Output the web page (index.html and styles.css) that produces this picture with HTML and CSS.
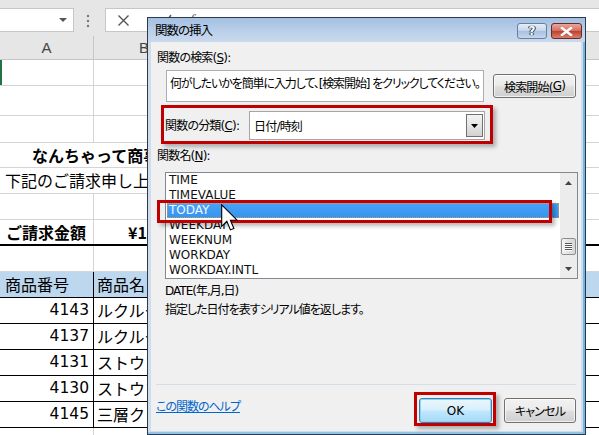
FILE: index.html
```html
<!DOCTYPE html>
<html lang="ja">
<head>
<meta charset="utf-8">
<title>関数の挿入</title>
<link rel="stylesheet" href="styles.css">
</head>
<body>
<div class="excel">
  <div class="fbar">
    <div class="namebox"><span class="nb-arrow"></span></div>
    <svg class="dots" width="6" height="14" viewBox="0 0 6 14"><circle cx="3" cy="2" r="1.2" fill="#777"/><circle cx="3" cy="7" r="1.2" fill="#777"/><circle cx="3" cy="12" r="1.2" fill="#777"/></svg>
    <div class="fbox">
      <svg class="fx-x" width="13" height="13" viewBox="0 0 13 13"><path d="M1.5 1.5 L11.5 11.5 M11.5 1.5 L1.5 11.5" stroke="#555" stroke-width="1.4" fill="none"/></svg>
      <svg class="fx-ok" width="14" height="14" viewBox="0 0 14 14"><path d="M1 8 L5 12 L13 1" stroke="#555" stroke-width="1.4" fill="none"/></svg>
      <span class="fx-f">fx</span>
    </div>
  </div>
  <div class="colhdr">
    <div class="ch ch-a">A</div>
    <div class="ch ch-b">B</div>
  </div>
  <div class="grid">
    <div class="row r26"><div class="ca active"></div><div class="cb"></div></div>
    <div class="row r30"><div class="ca"></div><div class="cb"></div></div>
    <div class="row r27"><div class="ca"></div><div class="cb"></div></div>
    <div class="row r25"><div class="span title">なんちゃって商事株式会社</div></div>
    <div class="row r26"><div class="span lead">下記のご請求申し上げます。</div></div>
    <div class="row r26"><div class="ca"></div><div class="cb"></div></div>
    <div class="row r26 total"><div class="ca bold">ご請求金額</div><div class="cb bold amt">¥12,960</div></div>
    <div class="row r26"><div class="ca"></div><div class="cb"></div></div>
    <div class="row r26 tbl thead"><div class="ca">商品番号</div><div class="cb">商品名</div></div>
    <div class="row r26 tbl"><div class="ca num">4143</div><div class="cb">ルクルーゼ</div></div>
    <div class="row r26 tbl"><div class="ca num">4137</div><div class="cb">ルクルーゼ</div></div>
    <div class="row r26 tbl"><div class="ca num">4131</div><div class="cb">ストウブ</div></div>
    <div class="row r26 tbl"><div class="ca num">4130</div><div class="cb">ストウブ</div></div>
    <div class="row r26 tbl"><div class="ca num">4145</div><div class="cb">三層クラッド</div></div>
    <div class="row r26"><div class="ca"></div><div class="cb"></div></div>
  </div>
</div>

<div class="dlg">
  <div class="dlg-title">
    <span class="caption">関数の挿入</span>
    <span class="tb tb-help">?</span>
    <span class="tb tb-close"><svg width="13" height="9" viewBox="0 0 13 9"><path d="M2 1 L11 8 M11 1 L2 8" stroke="#fff" stroke-width="2.4" fill="none" stroke-linecap="square"/></svg></span>
  </div>
  <div class="client">
    <div class="lbl l1">関数の検索(<u>S</u>):</div>
    <div class="search-row">
      <div class="searchbox">何がしたいかを簡単に入力して、[検索開始] をクリックしてください。</div>
      <div class="btn searchbtn">検索開始(<u>G</u>)</div>
    </div>
    <div class="cat-row">
      <span class="lbl cat-lbl">関数の分類(<u>C</u>):</span>
      <div class="combo">
        <span class="combo-text">日付/時刻</span>
        <span class="combo-btn"><svg width="7" height="4" viewBox="0 0 7 4"><path d="M0 0 L7 0 L3.5 4 Z" fill="#000"/></svg></span>
      </div>
    </div>
    <div class="lbl l2">関数名(<u>N</u>):</div>
    <div class="listbox">
      <div class="items">
        <div class="item">TIME</div>
        <div class="item">TIMEVALUE</div>
        <div class="item sel">TODAY</div>
        <div class="item">WEEKDAY</div>
        <div class="item">WEEKNUM</div>
        <div class="item">WORKDAY</div>
        <div class="item">WORKDAY.INTL</div>
      </div>
      <div class="vscroll">
        <svg class="arr" width="7" height="4" viewBox="0 0 7 4"><path d="M0 4 L7 4 L3.5 0 Z" fill="#444"/></svg>
        <div class="track">
          <div class="thumb"><span></span><span></span><span></span><span></span></div>
        </div>
        <svg class="arr" width="7" height="4" viewBox="0 0 7 4"><path d="M0 0 L7 0 L3.5 4 Z" fill="#444"/></svg>
      </div>
    </div>
    <div class="syntax">DATE(年,月,日)</div>
    <div class="desc">指定した日付を表すシリアル値を返します。</div>
    <div class="spacer"></div>
    <div class="sep"></div>
    <div class="bottom-row">
      <a class="helplink" href="#">この関数のヘルプ</a>
      <div class="btn ok">OK</div>
      <div class="btn cancel">キャンセル</div>
    </div>
  </div>
</div>

<div class="hl hl-cat"></div>
<div class="hl hl-today"></div>
<div class="hl hl-ok"></div>

<svg class="cursor" width="18" height="28" viewBox="0 0 13 20"><path d="M0.5 0.5 L0.5 16 L4.2 12.4 L6.8 18.6 L9.3 17.6 L6.8 11.6 L11.6 11.6 Z" fill="#fff" stroke="#000" stroke-width="0.8" stroke-linejoin="miter"/></svg>
</body>
</html>
```

FILE: styles.css
```css
* { box-sizing: border-box; margin: 0; padding: 0; }
html, body { width: 599px; height: 435px; overflow: hidden; }
body {
  position: relative;
  background: #fff;
  font-family: "Noto Sans CJK JP", sans-serif;
  color: #000;
}

/* ---------- spreadsheet ---------- */
.fbar {
  display: flex;
  align-items: flex-start;
  height: 36px;
  background: #e6e6e6;
  padding-top: 8px;
}
.namebox {
  width: 74px;
  height: 24px;
  background: #fff;
  border: 1px solid #c6c6c6;
  border-left: 0;
  display: flex;
  align-items: center;
  justify-content: flex-end;
  padding-right: 6px;
}
.nb-arrow {
  width: 0; height: 0;
  border-left: 4px solid transparent;
  border-right: 4px solid transparent;
  border-top: 4px solid #555;
}
.dots { margin-left: 11px; margin-top: 6px; }
.fbox {
  flex: 1;
  margin-left: 14px;
  height: 24px;
  background: #fff;
  border: 1px solid #c6c6c6;
  border-right: 0;
  display: flex;
  align-items: center;
  padding-left: 11px;
}
.fx-ok { margin-left: 28px; margin-top: 2px; }
.fx-f { margin-left: 18px; font-family: "Liberation Serif", serif; font-style: italic; font-size: 15px; color: #555; }

.colhdr {
  display: flex;
  height: 24px;
  background: #e6e6e6;
  border-bottom: 1px solid #c6c6c6;
  font-family: "Liberation Sans", sans-serif;
  font-size: 15px;
  color: #444;
  line-height: 23px;
}
.ch { text-align: center; }
.ch-a { width: 94px; border-right: 1px solid #c6c6c6; }
.ch-b { width: 100px; }

.grid { font-size: 16px; }
.row { display: flex; border-bottom: 1px solid #d4d4d4; }
.r25 { height: 25px; }
.r26 { height: 26px; }
.r27 { height: 27px; }
.r30 { height: 30px; }
.row > div { line-height: 24px; white-space: nowrap; overflow: hidden; }
.ca { width: 94px; border-right: 1px solid #d4d4d4; padding-left: 6px; }
.cb { flex: 1; padding-left: 3px; }
.active { border-left: 2px solid #217346; }
.span { flex: 1; }
.title { font-weight: bold; padding-left: 32px; }
.lead { padding-left: 5px; }
.bold { font-weight: bold; }
.amt { padding-left: 34px; }
.total { border-bottom: 2px solid #000; }
.tbl { border-bottom-color: #000; }
.tbl .ca { border-right-color: #000; padding-left: 5px; }
.thead { background: #bdd7ee; }
.thead .cb { background: #bdd7ee; }
.num { text-align: right; padding-right: 4px; font-family: "DejaVu Sans", sans-serif; font-size: 15.5px; }

/* ---------- dialog ---------- */
.dlg {
  position: absolute;
  left: 147px;
  top: 17px;
  width: 439px;
  height: 418px;
  border: 1px solid #2c3a4c;
  background: #cfdcec;
  box-shadow: inset -2px 0 0 #6fb5e6, inset 0 -2px 0 #8fc3ea;
  padding: 0 4px 3px 3px;
  display: flex;
  flex-direction: column;
  font-family: "DejaVu Sans", "Noto Sans CJK JP", sans-serif;
  font-size: 12px;
  font-feature-settings: "palt";
}
.dlg-title {
  height: 24px;
  margin: 0 -4px 0 -3px;
  padding: 0 3px 0 7px;
  background: linear-gradient(#a3bfe2, #bcd1ea 60%, #c9d9ed);
  display: flex;
  align-items: flex-start;
}
.caption { font-family: "Noto Sans CJK JP", sans-serif; font-size: 12.5px; letter-spacing: -1px; line-height: 24px; color: #000; flex: 1; }
.tb {
  margin-top: 5px;
  height: 16px;
  border-radius: 3px;
  display: flex;
  align-items: center;
  justify-content: center;
}
.tb-help {
  width: 30px;
  border: 1px solid #6a7f99;
  background: linear-gradient(#e6eef8, #c3d5eb 48%, #a9c1df 52%, #c4d7ee);
  color: #fff;
  font-family: "DejaVu Sans", sans-serif;
  font-weight: bold;
  font-size: 12px;
  text-shadow: 0 0 1px #2a3a55, 0 0 1px #2a3a55, 1px 0 0 #2a3a55, -1px 0 0 #2a3a55;
}
.tb-close {
  width: 31px;
  margin-left: 4px;
  border: 1px solid #6b2a23;
  background: linear-gradient(#e8a79c, #d16f62 48%, #c0402f 52%, #d7806f);
}

.client {
  flex: 1;
  background: #f0f0f0;
  display: flex;
  flex-direction: column;
  letter-spacing: -0.8px;
}
.lbl { line-height: 16px; white-space: nowrap; }
.l1 { margin: 8px 0 0 6px; }
.search-row { display: flex; align-items: flex-start; margin-top: 4px; }
.searchbox {
  margin-left: 15px;
  width: 318px;
  height: 32px;
  background: #fff;
  border: 1px solid #abadb3;
  padding: 5px 0 0 3px;
  line-height: 16px;
  letter-spacing: -1.1px;
  white-space: nowrap;
  overflow: hidden;
}
.btn {
  height: 24px;
  border: 1px solid #707070;
  border-radius: 3px;
  background: linear-gradient(#f2f2f2, #ebebeb 45%, #dddddd 55%, #cfcfcf);
  box-shadow: inset 0 0 0 1px rgba(255,255,255,0.7);
  display: flex;
  align-items: center;
  justify-content: center;
  white-space: nowrap;
}
.searchbtn { margin: 4px 0 0 9px; width: 83px; }

.cat-row { display: flex; align-items: center; margin-top: 9px; height: 29px; }
.cat-lbl { margin-left: 14px; width: 84px; }
.combo {
  width: 236px;
  height: 29px;
  background: #fff;
  border: 1px solid #a5a5a5;
  display: flex;
  align-items: center;
  padding: 0 1px 0 4px;
}
.combo-text { flex: 1; }
.combo-btn {
  width: 17px;
  height: 23px;
  border: 1px solid #707070;
  background: linear-gradient(#f3f3f3, #e5e5e5 50%, #d2d2d2);
  display: flex;
  align-items: center;
  justify-content: center;
}

.l2 { margin: 9px 0 0 6px; line-height: 15px; }
.listbox {
  margin: 8px 0 0 14px;
  width: 413px;
  height: 107px;
  background: #fff;
  border: 1px solid #828790;
  display: flex;
  letter-spacing: normal;
}
.items { flex: 1; }
.item {
  height: 15px;
  line-height: 15px;
  margin: 0 1px;
  padding-left: 2px;
  color: #111;
  white-space: nowrap;
}
.item.sel {
  background: linear-gradient(#4aa3f7, #3394f0);
  color: #f2f7ff;
  outline: 1px dotted #d89a4a;
  outline-offset: -1px;
}
.vscroll {
  width: 17px;
  background: #ececec;
  display: flex;
  flex-direction: column;
  align-items: center;
  padding: 8px 0 7px;
}
.track { flex: 1; width: 100%; padding-top: 53px; display: flex; justify-content: center; }
.thumb {
  width: 15px;
  height: 17px;
  border: 1px solid #8e8f8f;
  border-radius: 2px;
  background: linear-gradient(90deg, #f5f5f5, #e2e2e2 50%, #d6d6d6);
  display: flex;
  flex-direction: column;
  align-items: center;
  justify-content: center;
  gap: 1px;
}
.thumb span { width: 7px; height: 1px; background: #555; box-shadow: 0 1px 0 #fff; }

.syntax { margin: 3px 0 0 14px; line-height: 19px; letter-spacing: -1px; }
.desc { margin-left: 14px; line-height: 19px; letter-spacing: -1px; }
.spacer { flex: 1; }
.sep { height: 1px; margin: 0 5px; background: #d5dde5; }
.bottom-row { display: flex; align-items: flex-start; margin: 13px 5px 8px 5px; height: 25px; }
.helplink {
  margin-top: 2px;
  line-height: 15px;
  color: #0066cc;
  text-decoration: underline;
  letter-spacing: -1px;
  flex: 1;
}
.ok {
  width: 73px;
  height: 25px;
  letter-spacing: normal;
  border-color: #3c7fb1;
  background: linear-gradient(#eaf6fd, #d9f0fc 45%, #bee6fd 55%, #a7d9f5);
  box-shadow: inset 0 0 0 1px #8ed4f8;
}
.cancel { width: 72px; height: 25px; margin-left: 12px; }

/* ---------- annotations ---------- */
.hl {
  position: absolute;
  border: 3px solid #c00000;
  box-shadow: 3px 3px 4px rgba(0,0,0,0.28);
}
.hl-cat { left: 161px; top: 105px; width: 332px; height: 39px; }
.hl-today { left: 157px; top: 200px; width: 395px; height: 23px; }
.hl-ok { left: 414px; top: 392px; width: 82px; height: 34px; }

.cursor { position: absolute; left: 221px; top: 204px; }
```
